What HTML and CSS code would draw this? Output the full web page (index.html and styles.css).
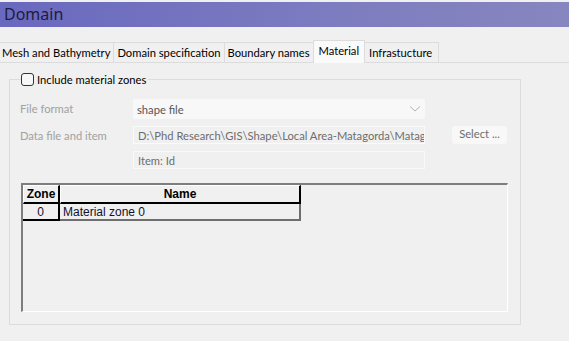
FILE: index.html
```html
<!DOCTYPE html>
<html lang="en">
<head>
    <meta charset="UTF-8">
    <title>Domain</title>
    <link rel="stylesheet" href="styles.css">
</head>
<body>
    <div class="titlebar">Domain</div>

    <div class="tabs">
        <div class="tab">Mesh and Bathymetry</div>
        <div class="tab">Domain specification</div>
        <div class="tab">Boundary names</div>
        <div class="tab active">Material</div>
        <div class="tab">Infrastucture</div>
    </div>

    <fieldset class="group">
        <legend class="legend">
            <span class="check"></span>
            Include material zones
        </legend>

        <div class="form">
            <div class="label">File format</div>
            <div class="combo">
                <span>shape file</span>
                <svg width="12" height="8" viewBox="0 0 12 8"><path d="M1 1.5 L6 6 L11 1.5" fill="none" stroke="#b4b4b4" stroke-width="1"/></svg>
            </div>
            <div></div>

            <div class="label">Data file and item</div>
            <div class="field">D:\Phd Research\GIS\Shape\Local Area-Matagorda\Matago</div>
            <div class="button">Select ...</div>

            <div></div>
            <div class="field">Item: Id</div>
            <div></div>
        </div>

        <div class="grid-frame">
            <div class="grid">
                <div class="hcell">Zone</div>
                <div class="hcell">Name</div>
                <div class="cell num">0</div>
                <div class="cell name">Material zone 0</div>
            </div>
        </div>
    </fieldset>
</body>
</html>
```

FILE: styles.css
```css
body { margin: 0; background: #f0f0f0; font-family: Lato, "Noto Sans", sans-serif; font-size: 11.2px; color: #000; }

.titlebar { margin-top: 2px; height: 25px; line-height: 24px; padding-left: 4px; font-family: "Noto Sans", sans-serif; font-size: 16px; color: #1c1c3c; background: linear-gradient(to right, #6968bf, #7b7bc0 55%, #8886bf); }

.tabs { display: flex; align-items: flex-end; height: 22px; margin-top: 13px; border-bottom: 1px solid #dcdcdc; }
.tab { height: 19px; line-height: 19px; padding: 0 3px; border: 1px solid #dcdcdc; border-bottom: none; border-left: none; background: #f0f0f0; white-space: nowrap; }
.tab:first-child { padding-left: 2px; }
.tab:last-child { padding: 0 6px 0 4px; }
.tab.active { height: 22px; line-height: 19px; margin-bottom: -1px; padding: 0 5px; background: #fafafa; border-left: 1px solid #dcdcdc; margin-left: -1px; }

.group { margin: 8px 0 0 9px; width: 512px; height: 254px; padding: 0; border: 1px solid #dcdcdc; box-sizing: border-box; }
.legend { display: flex; align-items: center; gap: 3px; margin-left: 11px; padding: 0 2px 0 0; height: 16px; }
.check { width: 11px; height: 11px; border: 1px solid #333; border-radius: 3px; background: #f7f7f7; }

.form { display: grid; grid-template-columns: 113px 292px 27px 55px; grid-template-rows: 20px 18px 18px; row-gap: 7px; margin: 12px 0 0 10px; }
.form > :nth-child(3n) { grid-column: 4; }
.label { color: #a0a0a0; line-height: 20px; }
.combo { display: flex; align-items: center; justify-content: space-between; padding: 0 4px; background: #f8f8f8; border-radius: 2px; color: #555; }
.field { padding: 0 4px; line-height: 17px; background: #f0f0f0; border: 1px solid #fafafa; color: #6d6d6d; white-space: nowrap; overflow: hidden; }
.button { grid-column: 4; line-height: 16px; text-align: center; background: #f8f8f8; border-radius: 3px; color: #6d6d6d; }

.grid-frame { margin: 14px 0 0 11px; width: 487px; height: 129px; box-sizing: border-box; border-top: 2px solid #7e7e7e; border-left: 2px solid #7e7e7e; border-right: 1px solid #fff; border-bottom: 1px solid #fff; }
.grid { display: grid; grid-template-columns: 37px 241px; grid-template-rows: 19px 17px; font-family: "Liberation Sans", Arial, sans-serif; font-size: 12px; }
.hcell { display: flex; align-items: center; justify-content: center; font-weight: bold; border-top: 1px solid #fff; border-left: 1px solid #fff; border-right: 2px solid #000; border-bottom: 2px solid #000; box-sizing: border-box; }
.cell { display: flex; align-items: center; box-sizing: border-box; color: #101030; }
.num { justify-content: center; border-right: 2px solid #000; border-bottom: 2px solid #000; }
.name { padding-left: 3px; border-right: 2px solid #6e6e6e; border-bottom: 2px solid #6e6e6e; }
```
